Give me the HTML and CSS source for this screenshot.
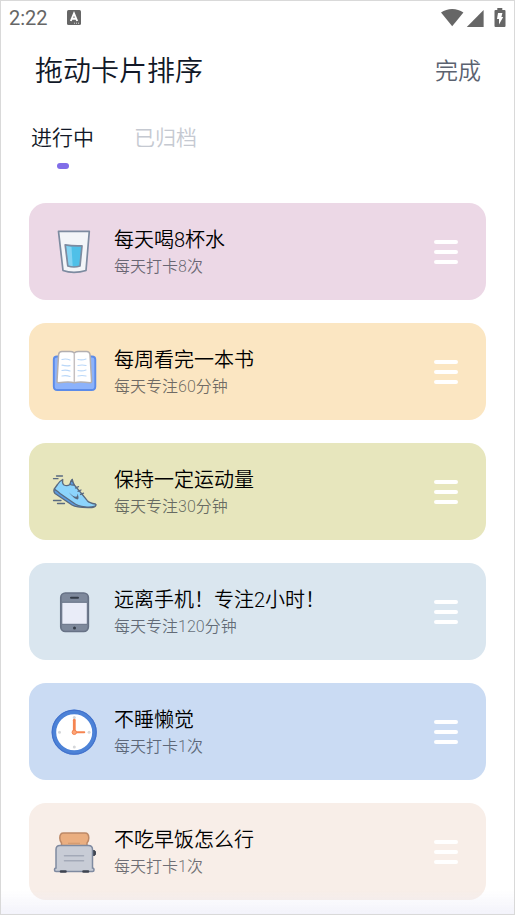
FILE: index.html
```html
<!DOCTYPE html>
<html lang="zh-CN">
<head>
<meta charset="utf-8">
<meta name="viewport" content="width=device-width, initial-scale=1">
<title>拖动卡片排序</title>
<link rel="stylesheet" href="styles.css">
</head>
<body>
<div class="status">
  <span class="time">2:22</span>
  <svg class="keyboard" width="14" height="15" viewBox="0 0 14 15" aria-hidden="true">
    <rect width="14" height="15" rx="1.5" fill="#666"/>
    <path d="M3.800 11 7 3.500 10.200 11M4.800 8.800h4.400" fill="none" stroke="#fff" stroke-width="1.900"/>
    <path d="M7 13.200h6" stroke="#ddd" stroke-dasharray="1 1"/>
  </svg>
  <svg class="signals" width="66" height="20" viewBox="0 0 66 20" aria-hidden="true" fill="#666">
    <path d="M0 4.500Q5 1 11.200 1T22.400 4.500L11.200 18.200z"/>
    <path d="M42.600 2v17H25.800z"/>
    <path d="M56.300 2V0h5v2h2.200q1 0 1 1v15q0 1-1 1h-9q-1 0-1-1V3q0-1 1-1z"/>
    <path d="M57 5h4.400l-1 4h1.800l-4.200 7.500v-5.500h-2z" fill="#fff"/>
  </svg>
</div>
<header class="header">
  <h1>拖动卡片排序</h1>
  <button class="done" type="button">完成</button>
</header>
<nav class="tabs">
  <button class="tab active" type="button">进行中</button>
  <button class="tab" type="button">已归档</button>
</nav>
<main>
  <ul class="cards">
    <li class="card pink">
      <svg class="icon" viewBox="0 0 46 46" aria-hidden="true" stroke-linejoin="round">
        <path d="M7.500 2.300h30.800L35 41.500Q29 43.300 23 43.300T12 41.500z" fill="#f3f5f8" stroke="#7d8ba0" stroke-width="1.700"/>
        <path d="M14.200 15.800Q22 17.300 31 16.800L29 37Q23 39 16.800 37z" fill="#4fc0e8"/>
        <path d="M15 17l5.500.8 1.200 19.400-4.500-.5z" fill="#83d3f2"/>
        <path d="M14.200 15.800Q22 17.300 31 16.800L29 37Q23 39 16.800 37z" fill="none" stroke="#7d8ba0" stroke-width="1.700"/>
      </svg>
      <div class="text"><h2>每天喝8杯水</h2><p>每天打卡8次</p></div>
      <button class="handle" type="button" aria-label="拖动排序"><span></span><span></span><span></span></button>
    </li>
    <li class="card yellow">
      <svg class="icon" viewBox="0 0 46 46" aria-hidden="true" stroke-linejoin="round">
        <path d="M6 7.500Q2.800 7.500 2.800 10.500v27q0 3.500 3.500 3.500h34.400q3.600 0 3.600-3.500v-27q0-3-3.300-3z" fill="#8cb2fa" stroke="#5c8be8" stroke-width="1.900"/>
        <path d="M23.300 3.800Q21.500 2.500 19 2.500h-8Q8 2.500 7.600 5.500L6 32.500q0 1.200 1.500 1.200 11-1.200 15.800 0 5-1.200 15.800 0 1.500 0 1.500-1.200L39 5.500Q38.500 2.500 35.600 2.500h-8q-2.500 0-4.300 1.300z" fill="#fff" stroke="#b3afb0" stroke-width="1.500"/>
        <path d="M23.300 4v29" stroke="#c5c0c1" stroke-width="1.500"/>
        <g fill="none" stroke="#b9d7f8" stroke-width="1.200" stroke-linecap="round">
          <path d="M11 10.500q4-1.200 8 .5M11 16.200q4 1 8 .5M11 21.500q4-1 8 .5M11 27q4-1 8 .5M27 10.500q4 1 8-.5M27 16.500q4-1 8 0M27 21.500q4 1 8-.5M27 27q4-1 8 0"/>
        </g>
      </svg>
      <div class="text"><h2>每周看完一本书</h2><p>每天专注60分钟</p></div>
      <button class="handle" type="button" aria-label="拖动排序"><span></span><span></span><span></span></button>
    </li>
    <li class="card green">
      <svg class="icon" viewBox="0 0 46 46" aria-hidden="true" stroke="#596a80" stroke-width="1.300" stroke-linejoin="round" stroke-linecap="round">
        <path d="M5.500 7h6M2.500 9.700h4.500M2.500 31.500h7.500M6.500 34.500h7" fill="none"/>
        <path d="M3.500 20Q2 22 4 24.500L21 36q5 3 20 2.500 4-.5 3.800-3L33 36 16 28z" fill="#5b9be0"/>
        <path d="M11.700 10.500Q8 12.500 6.500 15.500L3.300 20q3 2 5.700 4.500l13 9q5 4 12 4.300 6 .8 10-.8 1.500-1.300.3-2-6-1-8-3.300l-5-6.200-8-9.500q-2-3-2-5.500-2.300 2-2.300 5-3 2-6 .5-2-1.500-1.300-5.500z" fill="#8cd4fc"/>
        <path d="M21.300 10.500q-2.300 2-2.300 5 2 .8 4.300.5-2-3-2-5.500z" fill="#5b9be0"/>
        <path d="M24.500 19l3-1.300M27 22.300l3-1.300M29.500 25.500l3-1.300" fill="none"/>
        <path d="M26.500 24.500q2 5 .2 6-3 0-9-7.300 5 4.800 7.500 4.500 1.300-.2 1.300-3.200z" fill="#596a80" stroke="none"/>
      </svg>
      <div class="text"><h2>保持一定运动量</h2><p>每天专注30分钟</p></div>
      <button class="handle" type="button" aria-label="拖动排序"><span></span><span></span><span></span></button>
    </li>
    <li class="card teal">
      <svg class="icon" viewBox="0 0 46 46" aria-hidden="true">
        <rect x="9.800" y="4" width="27.500" height="38.500" rx="4.500" fill="#7e899c" stroke="#677286" stroke-width="1.700"/>
        <path d="M10.800 13.300h25.500v22H10.800z" fill="#e9ecf8" stroke="#677286" stroke-width="1"/>
        <path d="M20 8.700h7" stroke="#343c48" stroke-width="2" stroke-linecap="round"/>
        <circle cx="23.500" cy="39" r="1.500" fill="#343c48"/>
      </svg>
      <div class="text"><h2>远离手机！专注2小时！</h2><p>每天专注120分钟</p></div>
      <button class="handle" type="button" aria-label="拖动排序"><span></span><span></span><span></span></button>
    </li>
    <li class="card blue">
      <svg class="icon" viewBox="0 0 46 46" aria-hidden="true">
        <circle cx="23.200" cy="23.200" r="20.300" fill="#fff" stroke="#4c82d7" stroke-width="4.600"/>
        <circle cx="23.200" cy="23.200" r="22" fill="none" stroke="#426fca" stroke-width="1"/>
        <g fill="#d5d7da"><circle cx="23.300" cy="8.500" r="1.500"/><circle cx="8.500" cy="23.300" r="1.500"/><circle cx="38.100" cy="23.300" r="1.500"/><circle cx="23.300" cy="38.100" r="1.500"/></g>
        <path d="M23.300 11.200v12.100" stroke="#f58551" stroke-width="2.800" stroke-linecap="round"/>
        <path d="M23.300 23.300h10" stroke="#f58551" stroke-width="1.900" stroke-linecap="round"/>
        <circle cx="23.300" cy="23.300" r="2.200" fill="#fba578" stroke="#f58551"/>
      </svg>
      <div class="text"><h2>不睡懒觉</h2><p>每天打卡1次</p></div>
      <button class="handle" type="button" aria-label="拖动排序"><span></span><span></span><span></span></button>
    </li>
    <li class="card peach">
      <svg class="icon" viewBox="0 0 46 46" aria-hidden="true">
        <path d="M10.500 17v-3q-1.700-2-1.700-5Q8.800 4 12.500 4h21.500q3.800 0 3.800 5 0 3-1.800 5v3z" fill="#eaae80" stroke="#bd8967" stroke-width="1.500"/>
        <path d="M17 14.300h12" stroke="#d49a70" stroke-width="1.200"/>
        <path d="M42 21.500h1.500q1 0 1 2.500t-1 2.500H42z" fill="#3f4450" stroke="#3f4450"/>
        <path d="M9 16.500h28.500q4 0 4 4V39q1.500 0 1.500 2 0 1.500-1.500 1.500H5Q3.500 42.500 3.500 41q0-2 1.500-2V20.500q0-4 4-4z" fill="#c8ccd6" stroke="#7f8aa0" stroke-width="1.500"/>
        <path d="M13.500 26.800h19M13.500 31.800h19" stroke="#a3a9b8" stroke-width="1.600" stroke-linecap="round"/>
        <path d="M10 42.500h4.500M32.500 42.500H37" stroke="#3f4450" stroke-width="2.600" stroke-linecap="round"/>
      </svg>
      <div class="text"><h2>不吃早饭怎么行</h2><p>每天打卡1次</p></div>
      <button class="handle" type="button" aria-label="拖动排序"><span></span><span></span><span></span></button>
    </li>
  </ul>
</main>
<div class="fade"></div>
</body>
</html>
```
FILE: styles.css
```css
* { box-sizing: border-box; }

body {
  margin: 0;
  min-height: 100vh;
  border: 1px solid #d9d9d9;
  background: #fff;
  color: #111827;
  font-family: Roboto, "Noto Sans CJK SC", sans-serif;
  font-weight: 350;
}

h1, h2, p, ul { margin: 0; padding: 0; font-weight: inherit; }

button {
  padding: 0;
  border: 0;
  background: none;
  color: inherit;
  font: inherit;
  cursor: pointer;
}

.status {
  display: flex;
  align-items: center;
  height: 33px;
  padding: 0 7px 0 8px;
  color: #666;
}
.time { font-size: 20px; font-weight: 400; }
.keyboard { margin-left: 19px; }
.signals { margin-left: auto; }

.header {
  display: flex;
  align-items: center;
  justify-content: space-between;
  height: 76px;
  padding: 0 33px 0 34px;
}
.header h1 { font-size: 28px; line-height: 40px; }
.done { font-size: 23px; line-height: 32px; color: #5b6270; }

.tabs { display: flex; gap: 40px; height: 60px; padding: 12px 30px 0; }
.tab {
  display: flex;
  flex-direction: column;
  align-items: center;
  font-size: 21px;
  line-height: 32px;
  color: #c5c9d1;
}
.tab.active { color: #111827; }
.tab.active::after {
  content: "";
  width: 12px;
  height: 6px;
  margin-top: 9px;
  border-radius: 3px;
  background: #806de8;
}

.cards {
  display: flex;
  flex-direction: column;
  gap: 23px;
  padding: 33px 28px 12px;
  list-style: none;
}
.card {
  display: flex;
  align-items: center;
  min-height: 97px;
  padding: 0 28px 0 22px;
  border-radius: 17px;
}
.pink { background: #ecd8e6; }
.yellow { background: #fbe6c2; }
.green { background: #e7e6bd; }
.teal { background: #dae6ef; }
.blue { background: #cadbf3; }
.peach { background: #f8eee8; }

.icon { flex: none; width: 46px; height: 46px; }
.text { flex: 1; margin-left: 17px; padding-top: 2px; }
.text h2 { font-size: 20px; line-height: 28px; color: #000; }
.text p { font-size: 16px; line-height: 26px; color: rgba(17, 24, 39, 0.6); }

.handle { display: flex; flex-direction: column; gap: 6px; width: 24px; cursor: grab; }
.handle span { height: 4px; border-radius: 2px; background: #fff; }

.fade {
  position: fixed;
  right: 1px;
  bottom: 1px;
  left: 1px;
  height: 24px;
  background: linear-gradient(rgba(235, 235, 248, 0), rgba(235, 235, 248, 0.6));
  pointer-events: none;
}
```
